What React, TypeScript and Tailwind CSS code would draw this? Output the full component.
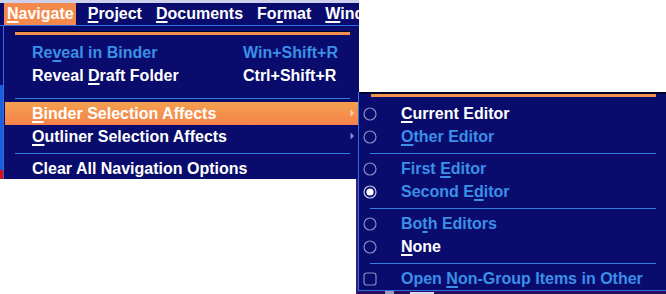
import React from "react";

const NAVY = "bg-[#090c6c]";

function U({ children }: { children: React.ReactNode }) {
  return <span className="underline decoration-2 underline-offset-[2px]">{children}</span>;
}

function Arrow({ light }: { light?: boolean }) {
  return (
    <svg width="5" height="8" viewBox="0 0 5 8" className="absolute left-[345px] top-[7px]">
      <path d="M0.5 0.5 L4 4 L0.5 7.5 Z" fill={light ? "#f9d2b4" : "#8c8cd0"} />
    </svg>
  );
}

function Radio({ checked }: { checked?: boolean }) {
  return (
    <svg width="14" height="14" viewBox="0 0 14 14" className="shrink-0">
      <circle cx="7" cy="7" r="6" fill="none" stroke={checked ? "#c8c8ee" : "#8a8ac8"} strokeWidth="1.2" />
      {checked && <circle cx="7" cy="7" r="3.6" fill="#ffffff" />}
    </svg>
  );
}

function Check() {
  return (
    <svg width="14" height="14" viewBox="0 0 14 14" className="shrink-0">
      <rect x="1" y="1" width="12" height="12" rx="2.5" fill="none" stroke="#8a8ac8" strokeWidth="1.2" />
    </svg>
  );
}

function SubRow({
  icon,
  children,
  white,
}: {
  icon: React.ReactNode;
  children: React.ReactNode;
  white?: boolean;
}) {
  return (
    <div className="flex items-center h-[23px] pl-[4px]">
      {icon}
      <span className={`ml-[24px] whitespace-nowrap ${white ? "text-white" : "text-[#3b8fe8]"}`}>{children}</span>
    </div>
  );
}

function SubSep() {
  return (
    <div className="h-[9px] pt-[5px]">
      <div className="ml-[11px] w-[286px] h-[1px] bg-[#2f80e0]" />
    </div>
  );
}

export default function App() {
  return (
    <div
      className="relative w-[666px] h-[294px] bg-white overflow-hidden font-bold text-[16px] leading-[23px]"
      style={{ fontFamily: '"Liberation Sans", Arial, sans-serif' }}
    >
      {/* background window bits */}
      <div className="absolute left-0 top-[26px] w-[3px] h-[153px] flex flex-col">
        <div className={`h-[59px] ${NAVY}`} />
        <div className="h-[85px] bg-[#1c5fd8]" />
        <div className="h-[9px] bg-[#e80a0a]" />
      </div>
      <div className="absolute left-[356px] top-[179px] w-[2px] h-[115px] bg-[#3a1c80]" />
      <div className="absolute left-[358px] top-[291px] w-[308px] h-[3px] bg-[#2a0c5c]">
        <div className="absolute left-[27px] top-[0px] w-[9px] h-[3px] bg-[#9a9ab8]" />
        <div className="absolute left-[52px] top-[1px] w-[24px] h-[2px] bg-[#d8d8f0]" />
      </div>

      {/* menubar + dropdown */}
      <div className="w-[359px] flex flex-col">
        <div className="h-[3px] bg-[#cfd0ec]" />
        <div className={`h-[22px] ${NAVY} flex items-stretch pl-[4px] gap-[9px] overflow-hidden text-white leading-[22px]`}>
          <div className="pl-[3px] pr-[2px] bg-[#f5894b]">
            <U>N</U>avigate
          </div>
          <div className="pl-[3px] pr-[2px]">
            <U>P</U>roject
          </div>
          <div className="pl-[3px] pr-[2px]">
            <U>D</U>ocuments
          </div>
          <div className="pl-[3px] pr-[2px]">
            Fo<U>r</U>mat
          </div>
          <div className="pl-[3px] pr-[2px] whitespace-nowrap">
            <U>W</U>indow
          </div>
        </div>
        <div className="h-[1px] bg-[#2a6ee0]" />
        <div className={`ml-[3px] h-[153px] border-l border-[#2a6ee0] ${NAVY} flex flex-col`}>
          <div className="pt-[5px] pl-[11px]">
            <div className="w-[335px] h-[1px] bg-[#00002a]" />
            <div className="w-[335px] h-[3px] bg-[#f3904c]" />
          </div>
          <div className="h-[6px]" />
          <div className="flex items-center h-[23px] pl-[28px] text-[#3b8fe8]">
            <span className="w-[211px]">
              Re<U>v</U>eal in Binder
            </span>
            <span>Win+Shift+R</span>
          </div>
          <div className="flex items-center h-[23px] pl-[28px] text-white">
            <span className="w-[211px]">
              Reveal <U>D</U>raft Folder
            </span>
            <span>Ctrl+Shift+R</span>
          </div>
          <div className="h-[15px] pt-[11px]">
            <div className="ml-[11px] w-[335px] h-[1px] bg-[#2f80e0]" />
          </div>
          <div className="relative ml-[1px] h-[23px] pl-[27px] flex items-center text-white bg-gradient-to-b from-[#f3a04f] to-[#f6824a]">
            <span>
              <U>B</U>inder Selection Affects
            </span>
            <Arrow light />
          </div>
          <div className="relative ml-[1px] h-[23px] pl-[27px] flex items-center text-white">
            <span>
              <U>O</U>utliner Selection Affects
            </span>
            <Arrow />
          </div>
          <div className="h-[9px] pt-[5px]">
            <div className="ml-[11px] w-[335px] h-[1px] bg-[#2f80e0]" />
          </div>
          <div className="flex items-center h-[22px] pl-[28px] text-white">Clear All Navigation Options</div>
        </div>
      </div>

      {/* submenu */}
      <div
        className={`absolute left-[358px] top-[92px] w-[308px] h-[199px] border-l border-b border-[#2a6ee0] ${NAVY} flex flex-col`}
      >
        <div className="h-[2px] bg-[#00002a]" />
        <div className="ml-[12px] w-[285px] h-[3px] bg-[#f3904c]" />
        <div className="h-[5px]" />
        <SubRow icon={<Radio />} white>
          <U>C</U>urrent Editor
        </SubRow>
        <SubRow icon={<Radio />}>
          <U>O</U>ther Editor
        </SubRow>
        <SubSep />
        <SubRow icon={<Radio />}>
          First <U>E</U>ditor
        </SubRow>
        <SubRow icon={<Radio checked />}>
          Second E<U>d</U>itor
        </SubRow>
        <SubSep />
        <SubRow icon={<Radio />}>
          Bo<U>t</U>h Editors
        </SubRow>
        <SubRow icon={<Radio />} white>
          <U>N</U>one
        </SubRow>
        <SubSep />
        <SubRow icon={<Check />}>
          Open <U>N</U>on-Group Items in Other
        </SubRow>
      </div>
    </div>
  );
}
